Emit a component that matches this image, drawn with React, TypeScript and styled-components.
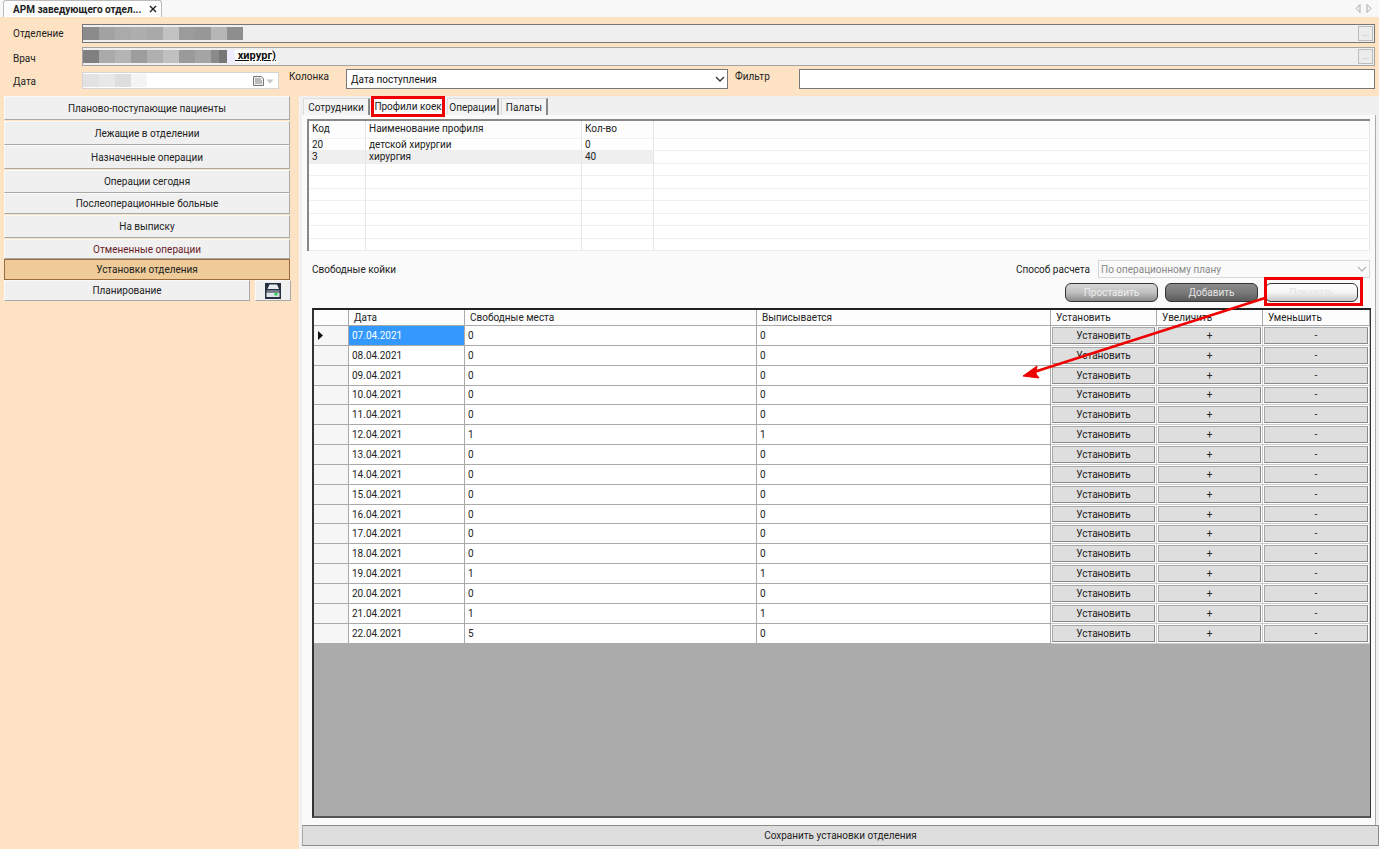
import React from "react";
import styled, { createGlobalStyle } from "styled-components";

const Global = createGlobalStyle`
  html, body { margin: 0; padding: 0; background: #fde3c3; }
  body { font-family: Roboto, "Noto Sans", sans-serif; font-size: 10px; color: #222; overflow: hidden; }
  * { box-sizing: border-box; }
`;

const Page = styled.div`
  position: relative; width: 1379px; height: 849px; display: flex; flex-direction: column; overflow: hidden; background: #fde3c3;
`;
const TabStrip = styled.div`
  height: 17px; flex: none; background: #f8f8f8; display: flex; align-items: flex-end; justify-content: space-between; padding: 0 6px 0 3px;
`;
const DocTab = styled.div`
  width: 159px; height: 17px; background: #fdfdfd; border: 1px solid #bbb; border-bottom: none; border-radius: 3px 3px 0 0;
  display: flex; align-items: center; justify-content: space-between; padding: 0 3px 0 9px; font-weight: 700; font-size: 10px; color: #222;
`;
const ScrollArrows = styled.div`
  display: flex; gap: 5px; align-self: center; padding-right: 1px;
`;
const Header = styled.div`
  height: 79px; flex: none; padding: 7px 4px 0 82px; display: flex; flex-direction: column; gap: 4px;
`;
const FieldRow = styled.div`
  position: relative; display: flex; align-items: center; height: 19px;
`;
const FieldLabel = styled.span<{ $top: number }>`
  position: absolute; left: -69px; top: ${(p) => p.$top}px;
`;
const LookupField = styled.div<{ $light?: boolean }>`
  flex: 1; height: 19px; background: #efefef; border: 1px solid ${(p) => (p.$light ? "#a4a4a4" : "#777")}; display: flex; align-items: center; justify-content: space-between;
`;
const Blur = styled.div`
  display: flex; height: 13px; align-items: stretch;
`;
const BlurCell = styled.div<{ $c: string; $w: number }>`
  width: ${(p) => p.$w}px; background: ${(p) => p.$c};
`;
const DoctorText = styled.span`
  font-weight: 700; font-size: 11px; color: #111; text-decoration: underline; background: #fff; height: 13px; line-height: 12px; white-space: pre;
`;
const LookupLeft = styled.div`
  display: flex; align-items: center;
`;
const EllipsisButton = styled.div`
  width: 15px; height: 15px; margin-right: 1px; background: #ececec; border: 1px solid #bcbcbc; color: #aaa; font-size: 9px; line-height: 12px; text-align: center;
`;
const FilterRow = styled.div`
  display: flex; align-items: flex-start; height: 20px; margin-top: -1px;
`;
const DateAnchor = styled.div`
  position: relative; width: 0; height: 20px;
`;
const DateField = styled.div`
  width: 197px; height: 17px; margin-top: 3px; background: #fff; border: 1px solid #d4d4d4; display: flex; align-items: center; justify-content: space-between; padding-right: 2px;
`;
const ColumnLabel = styled.span<{ $w: number; $ml: number }>`
  width: ${(p) => p.$w}px; margin-left: ${(p) => p.$ml}px; padding-top: 2px;
`;
const ColumnSelect = styled.div`
  width: 382px; height: 20px; background: #fff; border: 1px solid #777; display: flex; align-items: center; justify-content: space-between; padding: 0 1px 0 4px; color: #111;
`;
const FilterInput = styled.div`
  width: 576px; height: 20px; background: #fff; border: 1px solid #777;
`;
const Body = styled.div`
  flex: 1; display: flex; min-height: 0;
`;
const Side = styled.div`
  width: 300px; flex: none; padding: 0 9px 0 4px; display: flex; flex-direction: column; border-right: 1px solid #f6f6f6;
`;
const SideButton = styled.div<{ $h: number; $mt?: number; $red?: boolean; $active?: boolean }>`
  height: ${(p) => p.$h}px; margin-top: ${(p) => p.$mt ?? 0}px; flex: none;
  background: ${(p) => (p.$active ? "#eecb99" : "#f0f0f0")};
  border: 1px solid; border-color: ${(p) => (p.$active ? "#9a6a3a" : "#fafafa #a8a8a8 #a8a8a8 #fafafa")};
  display: flex; align-items: center; justify-content: center; color: ${(p) => (p.$red ? "#6a1b2a" : "#222")};
`;
const SideSplit = styled.div`
  display: flex; gap: 4px; height: 21px;
`;
const PlanButton = styled(SideButton)`
  width: 246px;
`;
const PrintButton = styled(SideButton)`
  width: 36px; margin-left: 1px;
`;
const Main = styled.div`
  flex: 1; min-width: 0; background: #f0f0f0; display: flex; flex-direction: column; padding: 0 0 3px 2px;
`;
const Tabs = styled.div`
  height: 19px; flex: none; display: flex; align-items: flex-end; padding-left: 1px; gap: 2px;
`;
const InnerTab = styled.div<{ $w: number; $active?: boolean }>`
  width: ${(p) => p.$w}px; height: ${(p) => (p.$active ? 18 : 17)}px; background: ${(p) => (p.$active ? "#fafafa" : "#f4f4f4")}; border: 1px solid #ddd; border-right: 2px solid #888; border-bottom: none;
  display: flex; align-items: center; justify-content: center; white-space: nowrap;
`;
const Sheet = styled.div`
  flex: 1; background: #fafafa; display: flex; flex-direction: column; padding: 4px 4px 8px 5px; min-height: 0; margin-right: 3px; border-right: 1px solid #aaa;
`;
const ProfileTable = styled.div`
  height: 132px; flex: none; background: #fff; border-top: 2px solid #888; border-left: 2px solid #888; margin-right: 1px;
`;
const ProfileRow = styled.div<{ $head?: boolean }>`
  display: grid; grid-template-columns: 57px 216px 72px 1fr; height: ${(p) => (p.$head ? 18 : 12.45)}px;
  line-height: 12px; color: #222;
  border-bottom: 1px solid ${(p) => (p.$head ? "#f0f0f0" : "#eee")};
`;
const ProfileCell = styled.div<{ $head?: boolean; $shade?: boolean }>`
  padding-left: 3px; border-right: 1px solid #e6e6e6; padding-top: ${(p) => (p.$head ? 2 : 0)}px; overflow: hidden;
  background: ${(p) => (p.$shade ? "#efefef" : p.$head ? "#fdfdfd" : "#fff")};
`;
const Controls = styled.div`
  height: 56px; flex: none; display: flex; flex-direction: column;
`;
const ControlTop = styled.div`
  display: flex; justify-content: space-between; align-items: center; padding: 9px 1px 0 5px; height: 27px;
`;
const MethodGroup = styled.div`
  display: flex; align-items: center; gap: 8px;
`;
const MethodSelect = styled.div`
  width: 272px; height: 18px; background: #fafafa; border: 1px solid #d8d8d8; color: #888; display: flex; align-items: center; justify-content: space-between; padding: 0 1px 0 2px;
`;
const ControlButtons = styled.div`
  display: flex; justify-content: flex-end; gap: 7px; padding: 5px 13px 0 0;
`;
const RoundButton = styled.div<{ $kind: "a" | "b" | "c" }>`
  width: 93px; height: 19px; border-radius: 6px; border: 1px solid #333; display: flex; align-items: center; justify-content: center;
  color: ${(p) => (p.$kind === "a" ? "#ececec" : "#e4e4e4")};
  background: ${(p) => p.$kind === "a" ? "linear-gradient(#d6d6d6, #c0c0c0 50%, #8a8a8a)" : p.$kind === "b" ? "linear-gradient(#8a8a8a, #7a7a7a 50%, #5a5a5a)" : "linear-gradient(#fff, #f4f4f4 50%, #c8c8c8)"};
`;
const GridFrame = styled.div`
  height: 510px; flex: none; margin-left: 5px; background: #ababab; border: 2px solid #333; border-top-color: #222; border-right-width: 1px; border-bottom-color: #555;
  margin-top: 1px;
`;
const GridRow = styled.div<{ $head?: boolean }>`
  display: grid; grid-template-columns: 35px 116px 292px 294px 106px 106px 107px; height: ${(p) => (p.$head ? 16 : 19.85)}px;
  background: ${(p) => (p.$head ? "#fdfdfd" : "#fff")};
  width: 1056px;
`;
const GridCell = styled.div<{ $head?: boolean; $selected?: boolean; $indicator?: boolean }>`
  display: flex; align-items: center; padding-left: ${(p) => (p.$head ? 5 : 3)}px;
  color: ${(p) => (p.$selected ? "#fff" : "#222")}; background: ${(p) => (p.$selected ? "#3399ff" : p.$indicator ? "#f6f6f6" : "transparent")};
  border-right: 1px solid #aaa; border-bottom: 1px solid #aaa; overflow: hidden; white-space: nowrap;
`;
const CellButtonWrap = styled.div`
  padding: 1px; border-right: 1px solid #ccc; border-bottom: 1px solid #ccc; display: flex;
`;
const CellButton = styled.div`
  flex: 1; background: #dedede; border: 1px solid; border-color: #a8a8a8 #8a8a8a #8a8a8a #a8a8a8; display: flex; align-items: center; justify-content: center; color: #222;
`;
const SaveButton = styled.div`
  height: 21px; flex: none; background: #dedede; border: 1px solid #8a8a8a; border-left-color: #aaa; display: flex; align-items: center; justify-content: center; color: #222;
`;
const RedBox = styled.div<{ $x: number; $y: number; $w: number; $h: number }>`
  position: absolute; left: ${(p) => p.$x}px; top: ${(p) => p.$y}px; width: ${(p) => p.$w}px; height: ${(p) => p.$h}px; border: 3px solid #ee0000; pointer-events: none;
`;
const ArrowLayer = styled.svg`
  position: absolute; left: 0; top: 0; pointer-events: none;
`;

const Chevron = ({ light }: { light?: boolean }) => (
  <svg width="12" height="8" viewBox="0 0 12 8"><path d="M2 2l4 4 4-4" fill="none" stroke={light ? "#bbb" : "#333"} strokeWidth="1.3" /></svg>
);

const blurA: [string, number][] = [["#8b8b8b", 16], ["#a2a2a2", 16], ["#aaa", 16], ["#aeaeae", 16], ["#a9a9a9", 16], ["#c2c2c2", 16], ["#9b9b9b", 16], ["#989898", 16], ["#b6b6b6", 16], ["#8e8e8e", 16]];
const blurB: [string, number][] = [["#808080", 16], ["#aaa", 16], ["#b4b4b4", 16], ["#9d9d9d", 16], ["#b0b0b0", 16], ["#c0c0c0", 16], ["#9a9a9a", 16], ["#a4a4a4", 16], ["#8a8a8a", 8], ["#777", 8], ["#eef", 8]];
const blurC: [string, number][] = [["#e2e2e2", 16], ["#e8e8e8", 16], ["#dedede", 16], ["#f4f4f4", 16]];

const profiles = [["20", "детской хирургии", "0"], ["3", "хирургия", "40"], ["", "", ""], ["", "", ""], ["", "", ""], ["", "", ""], ["", "", ""], ["", "", ""], ["", "", ""]];
const rows = [
  ["07.04.2021", "0", "0"], ["08.04.2021", "0", "0"], ["09.04.2021", "0", "0"], ["10.04.2021", "0", "0"],
  ["11.04.2021", "0", "0"], ["12.04.2021", "1", "1"], ["13.04.2021", "0", "0"], ["14.04.2021", "0", "0"],
  ["15.04.2021", "0", "0"], ["16.04.2021", "0", "0"], ["17.04.2021", "0", "0"], ["18.04.2021", "0", "0"],
  ["19.04.2021", "1", "1"], ["20.04.2021", "0", "0"], ["21.04.2021", "1", "1"], ["22.04.2021", "5", "0"],
];

const BlurStrip = ({ cells }: { cells: [string, number][] }) => (
  <Blur>{cells.map(([c, w], i) => <BlurCell key={i} $c={c} $w={w} />)}</Blur>
);

export default function App() {
  return (
    <Page>
      <Global />
      <TabStrip>
        <DocTab>
          <span>АРМ заведующего отдел...</span>
          <svg width="10" height="10" viewBox="0 0 10 10"><path d="M2 2l6 6M8 2l-6 6" stroke="#222" strokeWidth="1.4" /></svg>
        </DocTab>
        <ScrollArrows>
          <svg width="6" height="9" viewBox="0 0 6 9"><path d="M5 .5v8L1 4.5z" fill="#f4f4f4" stroke="#aaa" /></svg>
          <svg width="6" height="9" viewBox="0 0 6 9"><path d="M1 .5v8l4-4z" fill="#f4f4f4" stroke="#aaa" /></svg>
        </ScrollArrows>
      </TabStrip>
      <Header>
        <FieldRow>
          <FieldLabel $top={4}>Отделение</FieldLabel>
          <LookupField>
            <LookupLeft><BlurStrip cells={blurA} /></LookupLeft>
            <EllipsisButton>...</EllipsisButton>
          </LookupField>
        </FieldRow>
        <FieldRow>
          <FieldLabel $top={6}>Врач</FieldLabel>
          <LookupField $light>
            <LookupLeft><BlurStrip cells={blurB} /><DoctorText> хирург)</DoctorText></LookupLeft>
            <EllipsisButton>...</EllipsisButton>
          </LookupField>
        </FieldRow>
        <FilterRow>
          <DateAnchor><FieldLabel $top={7}>Дата</FieldLabel></DateAnchor>
          <DateField>
            <BlurStrip cells={blurC} />
            <svg width="24" height="12" viewBox="0 0 24 12">
              <path d="M1.5 1.5h8l2 2v7h-10z" fill="#eee" stroke="#777" />
              <path d="M3 4h6M3 6h7M3 8h7" stroke="#888" />
              <path d="M14.5 4.5h7l-3.5 4z" fill="#c4c4c4" />
            </svg>
          </DateField>
          <ColumnLabel $w={57} $ml={10}>Колонка</ColumnLabel>
          <ColumnSelect><span>Дата поступления</span><Chevron /></ColumnSelect>
          <ColumnLabel $w={64} $ml={7}>Фильтр</ColumnLabel>
          <FilterInput />
        </FilterRow>
      </Header>
      <Body>
        <Side>
          <SideButton $h={24}>Планово-поступающие пациенты</SideButton>
          <SideButton $h={24} $mt={1}>Лежащие в отделении</SideButton>
          <SideButton $h={24}>Назначенные операции</SideButton>
          <SideButton $h={23} $mt={1}>Операции сегодня</SideButton>
          <SideButton $h={21}>Послеоперационные больные</SideButton>
          <SideButton $h={23} $mt={1}>На выписку</SideButton>
          <SideButton $h={20} $mt={1} $red>Отмененные операции</SideButton>
          <SideButton $h={21} $active>Установки отделения</SideButton>
          <SideSplit>
            <PlanButton $h={21}>Планирование</PlanButton>
            <PrintButton $h={21}>
              <svg width="16" height="16" viewBox="0 0 16 16">
                <rect width="16" height="16" fill="#26303e" />
                <path d="M4.5 1.5h7.5l2 4.5H2.5z" fill="#e8ecf0" />
                <path d="M1.5 7h13v2h-13z" fill="#6f7b8a" />
                <path d="M1.5 9.5h13V14h-13z" fill="#dfe4e9" />
                <rect x="9.5" y="10" width="3" height="2.5" fill="#27d34a" />
              </svg>
            </PrintButton>
          </SideSplit>
        </Side>
        <Main>
          <Tabs>
            <InnerTab $w={67}>Сотрудники</InnerTab>
            <InnerTab $w={73} $active>Профили коек</InnerTab>
            <InnerTab $w={52}>Операции</InnerTab>
            <InnerTab $w={47}>Палаты</InnerTab>
          </Tabs>
          <Sheet>
            <ProfileTable>
              <ProfileRow $head>
                {["Код", "Наименование профиля", "Кол-во", ""].map((t, i) => <ProfileCell key={i} $head>{t}</ProfileCell>)}
              </ProfileRow>
              {profiles.map((r, i) => (
                <ProfileRow key={i}>
                  <ProfileCell $shade={i === 1}>{r[0]}</ProfileCell>
                  <ProfileCell $shade={i === 1}>{r[1]}</ProfileCell>
                  <ProfileCell $shade={i === 1}>{r[2]}</ProfileCell>
                  <ProfileCell />
                </ProfileRow>
              ))}
            </ProfileTable>
            <Controls>
              <ControlTop>
                <span>Свободные койки</span>
                <MethodGroup>
                  <span>Способ расчета</span>
                  <MethodSelect><span>По операционному плану</span><Chevron light /></MethodSelect>
                </MethodGroup>
              </ControlTop>
              <ControlButtons>
                <RoundButton $kind="a">Проставить</RoundButton>
                <RoundButton $kind="b">Добавить</RoundButton>
                <RoundButton $kind="c">Показать</RoundButton>
              </ControlButtons>
            </Controls>
            <GridFrame>
              <GridRow $head>
                {["", "Дата", "Свободные места", "Выписывается", "Установить", "Увеличить", "Уменьшить"].map((t, i) => <GridCell key={i} $head>{t}</GridCell>)}
              </GridRow>
              {rows.map((r, i) => (
                <GridRow key={r[0]}>
                  <GridCell $indicator>
                    {i === 0 && <svg width="6" height="9" viewBox="0 0 6 9"><path d="M1 0l5 4.5L1 9z" fill="#111" /></svg>}
                  </GridCell>
                  <GridCell $selected={i === 0}>{r[0]}</GridCell>
                  <GridCell>{r[1]}</GridCell>
                  <GridCell>{r[2]}</GridCell>
                  <CellButtonWrap><CellButton>Установить</CellButton></CellButtonWrap>
                  <CellButtonWrap><CellButton>+</CellButton></CellButtonWrap>
                  <CellButtonWrap><CellButton>-</CellButton></CellButtonWrap>
                </GridRow>
              ))}
            </GridFrame>
          </Sheet>
          <SaveButton>Сохранить установки отделения</SaveButton>
        </Main>
      </Body>
      <RedBox $x={371} $y={96} $w={74} $h={21} />
      <RedBox $x={1264} $y={277} $w={99} $h={29} />
      <ArrowLayer width="1379" height="849" viewBox="0 0 1379 849">
        <path d="M1265 298L1034 372" stroke="#ee0000" strokeWidth="2.5" />
        <path d="M1023 376l14-10-1 8 3 4z" fill="#ee0000" stroke="#ee0000" />
      </ArrowLayer>
    </Page>
  );
}
